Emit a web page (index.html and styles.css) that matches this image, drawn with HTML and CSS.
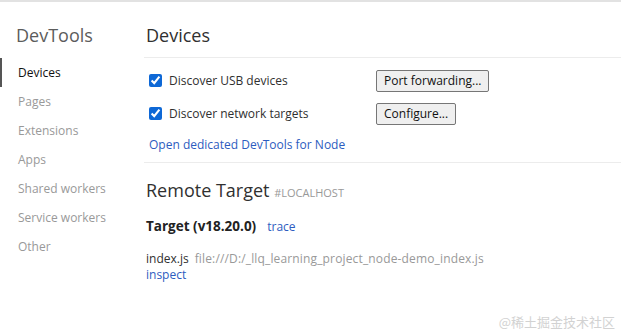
FILE: index.html
```html
<!DOCTYPE html>
<html lang="en">
<head>
  <meta charset="UTF-8"/>
  <title>Inspect with Chrome Developer Tools</title>
  <link rel="stylesheet" href="styles.css">
</head>
<body>

  <!-- SIDEBAR -->
  <div class="layout">
    <nav class="sidebar">
      <h1 class="sidebar-title">DevTools</h1>
      <ul class="menu">
        <li class="menu-item selected">Devices</li>
        <li class="menu-item">Pages</li>
        <li class="menu-item">Extensions</li>
        <li class="menu-item">Apps</li>
        <li class="menu-item">Shared workers</li>
        <li class="menu-item">Service workers</li>
        <li class="menu-item">Other</li>
      </ul>
    </nav>

    <!-- CONTENU -->
    <main class="content">
      <h2 class="content-title">Devices</h2>

      <section class="device-settings">
        <div class="setting-row">
          <label class="checkbox-label">
            <input type="checkbox" checked/>
            <span>Discover USB devices</span>
          </label>
          <button class="btn">Port forwarding...</button>
        </div>
        <div class="setting-row">
          <label class="checkbox-label">
            <input type="checkbox" checked/>
            <span>Discover network targets</span>
          </label>
          <button class="btn">Configure...</button>
        </div>
        <a href="#" class="link node-link">Open dedicated DevTools for Node</a>
      </section>

      <section class="remote">
        <h3 class="remote-title">Remote Target <span class="remote-host">#LOCALHOST</span></h3>
        <div class="target-header">
          <span class="target-name">Target (v18.20.0)</span>
          <a href="#" class="link">trace</a>
        </div>
        <div class="target-item">
          <div class="target-line">
            <span class="target-file">index.js</span>
            <span class="target-url">file:///D:/_llq_learning_project_node-demo_index.js</span>
          </div>
          <a href="#" class="link">inspect</a>
        </div>
      </section>
    </main>
  </div>

  <div class="watermark">@稀土掘金技术社区</div>
</body>
</html>
```

FILE: styles.css
```css
* {
  margin: 0;
  padding: 0;
  box-sizing: border-box;
}

body {
  font-family: 'Open Sans', 'Noto Sans', sans-serif;
  font-size: 12px;
  background: #ffffff;
  color: #303030;
  border-top: 2px solid #e2e2e2;
  height: 333px;
  overflow: hidden;
}

.layout {
  display: flex;
}

.sidebar {
  width: 144px;
  flex-shrink: 0;
  padding-top: 19px;
}

.sidebar-title {
  font-size: 18px;
  font-weight: 400;
  line-height: 28px;
  color: #5c5c5c;
  padding-left: 16px;
  margin-bottom: 9px;
}

.menu {
  list-style: none;
}

.menu-item {
  height: 29px;
  line-height: 29px;
  padding-left: 16px;
  color: #999999;
  border-left: 2px solid transparent;
}

.menu-item.selected {
  color: #111111;
  border-left-color: #555555;
}

.content {
  flex: 1;
  padding-top: 19px;
}

.content-title {
  font-size: 18px;
  font-weight: 400;
  line-height: 28px;
  color: #303030;
  padding-left: 2px;
  padding-bottom: 8px;
  border-bottom: 1px solid #ececec;
}

.device-settings {
  padding: 6px 0 9px 5px;
  border-bottom: 1px solid #ececec;
}

.setting-row {
  display: flex;
  align-items: center;
  height: 33px;
}

.checkbox-label {
  display: flex;
  align-items: center;
  gap: 7px;
  width: 227px;
}

.checkbox-label input {
  width: 13px;
  height: 13px;
  margin: 0;
  accent-color: #0e68d6;
}

.btn {
  font-family: inherit;
  font-size: 12px;
  color: #111111;
  background: #efefef;
  border: 1px solid #767676;
  border-radius: 2px;
  height: 22px;
  padding: 0 7px;
}

.link {
  color: #2d5cc0;
  text-decoration: none;
}

.node-link {
  display: block;
  line-height: 16px;
  margin-top: 7px;
}

.remote {
  padding: 13px 0 0 2px;
}

.remote-title {
  font-size: 18px;
  font-weight: 400;
  line-height: 28px;
  color: #303030;
}

.remote-host {
  font-size: 11px;
  color: #999999;
}

.target-header {
  margin-top: 10px;
  line-height: 18px;
  display: flex;
  align-items: baseline;
  gap: 11px;
}

.target-name {
  font-size: 13.5px;
  font-weight: 700;
  color: #222222;
}

.target-item {
  margin-top: 15px;
  line-height: 16px;
}

.target-line {
  display: flex;
  gap: 6px;
}

.target-url {
  color: #999999;
  letter-spacing: 0.15px;
}

.watermark {
  position: absolute;
  right: 6px;
  bottom: 2px;
  font-family: 'Noto Sans CJK SC', sans-serif;
  font-size: 13px;
  color: #d2d2d2;
}
```
